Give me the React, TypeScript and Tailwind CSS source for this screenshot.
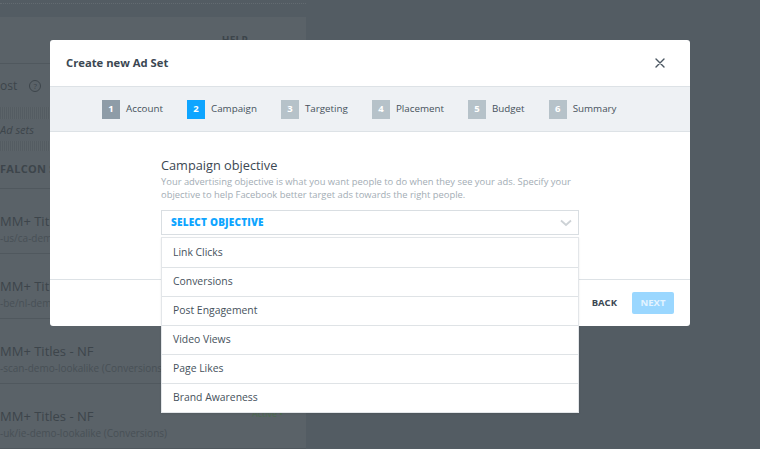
import React from 'react';

const steps = [
  { n: 1, label: 'Account', state: 'done' },
  { n: 2, label: 'Campaign', state: 'active' },
  { n: 3, label: 'Targeting', state: 'todo' },
  { n: 4, label: 'Placement', state: 'todo' },
  { n: 5, label: 'Budget', state: 'todo' },
  { n: 6, label: 'Summary', state: 'todo' },
];

const objectives = [
  'Link Clicks',
  'Conversions',
  'Post Engagement',
  'Video Views',
  'Page Likes',
  'Brand Awareness',
];

const rows = [
  { title: 'MM+ Titles', sub: '-us/ca-demo-lookalike (Conversions)' },
  { title: 'MM+ Titles', sub: '-be/nl-demo-lookalike (Conversions)' },
  { title: 'MM+ Titles - NF', sub: '-scan-demo-lookalike (Conversions)' },
  { title: 'MM+ Titles - NF', sub: '-uk/ie-demo-lookalike (Conversions)', active: true },
];

const hatch =
  'bg-[repeating-linear-gradient(90deg,#545c62_0px,#545c62_1px,#5c6469_1px,#5c6469_2px)]';

function Background() {
  return (
    <div className="flex h-full w-full flex-col">
      {/* top strip */}
      <div className="h-[18px] w-[306px] pt-[3px]">
        <div className="border-t border-dotted border-[#636b71]" />
      </div>
      <div className="flex w-[306px] flex-1 flex-col bg-[#5a6268] text-[#3d454b]">
        <div className="flex h-[47px] items-center justify-end border-b border-[#50585e] pr-[58px]">
          <span className="text-[10px] font-bold tracking-wide">HELP</span>
        </div>
        <div className="flex h-[43px] items-center gap-3 text-[12px]">
          <span>ost</span>
          <span className="flex h-[12px] w-[12px] items-center justify-center rounded-full border border-[#3d454b] text-[8px]">?</span>
        </div>
        <div className={`h-[12px] ${hatch}`} />
        <div className="flex h-[22px] items-center text-[11px] italic">Ad sets</div>
        <div className={`h-[10px] ${hatch}`} />
        <div className="flex h-[38px] items-center border-b border-[#50585e] text-[11px] font-bold tracking-wide">FALCON SOCIAL</div>
        {rows.map((r, i) => (
          <div key={i} className="relative flex h-[65px] flex-col border-b border-[#50585e] pt-[24px]">
            <span className="text-[13px] leading-[17px]">{r.title}</span>
            <span className="mt-[1px] text-[10px] leading-[15px] text-[#485056]">{r.sub}</span>
            {r.active && (
              <span className="absolute left-[252px] top-[23px] text-[9px] text-[#4c6a4e]">Active •</span>
            )}
          </div>
        ))}
      </div>
    </div>
  );
}

function Modal() {
  return (
    <div className="flex w-[640px] flex-col rounded-[3px] bg-white">
      {/* Header */}
      <div className="flex h-[47px] items-center justify-between border-b border-[#dde2e6] px-4">
        <h2 className="text-[11.25px] font-bold text-[#3b4752]">Create new Ad Set</h2>
        <svg width="10" height="10" viewBox="0 0 10 10" className="mr-[9px]">
          <path d="M1 1L9 9M9 1L1 9" stroke="#4a5661" strokeWidth="1.4" strokeLinecap="round" />
        </svg>
      </div>

      {/* Steps */}
      <div className="flex h-[45px] items-center gap-6 border-b border-[#dde2e6] bg-[#eef1f4] pl-[52px]">
        {steps.map((s) => (
          <div key={s.n} className="flex items-center gap-[6px]">
            <span
              className={`flex h-[19px] w-[18px] items-center justify-center text-[9.5px] font-bold text-white ${
                s.state === 'active' ? 'bg-[#0ea5ff]' : s.state === 'done' ? 'bg-[#8e9ca7]' : 'bg-[#b6c2c9]'
              }`}
            >
              {s.n}
            </span>
            <span className="text-[9.8px] text-[#46525c]">{s.label}</span>
          </div>
        ))}
      </div>

      {/* Body */}
      <div className="h-[147px] pt-[24px]">
        <div className="relative mx-auto w-[418px]">
          <h3 className="text-[12.75px] leading-[18px] text-[#3b4752]">Campaign objective</h3>
          <p className="mt-[2px] text-[9.4px] leading-[12.5px] text-[#a3adb5]">
            Your advertising objective is what you want people to do when they see your ads. Specify your objective to help Facebook better target ads towards the right people.
          </p>
          <div className="mt-[9px] flex h-[25px] items-center justify-between border border-[#d9dee2] pl-[9px] pr-[6px]">
            <span className="text-[10px] font-extrabold tracking-[0.2px] text-[#0ea5ff]">SELECT OBJECTIVE</span>
            <svg width="12" height="8" viewBox="0 0 12 8">
              <path d="M1 1.5L6 6L11 1.5" stroke="#cdd2d6" strokeWidth="1.8" fill="none" />
            </svg>
          </div>
          <ul className="absolute left-0 right-0 top-[calc(100%+2px)] z-10 border border-[#e3e6e9] bg-white shadow-[0_1px_2px_rgba(0,0,0,0.08)]">
            {objectives.map((o, i) => (
              <li
                key={o}
                className={`flex h-[29px] items-center pl-[11px] text-[10.4px] text-[#46525c] ${i > 0 ? 'border-t border-[#dfe3e6]' : ''}`}
              >
                {o}
              </li>
            ))}
          </ul>
        </div>
      </div>

      {/* Footer */}
      <div className="flex h-[47px] items-center justify-end gap-[15px] border-t border-[#dde2e6] pr-4">
        <button className="text-[9.5px] font-bold text-[#3b4752]">BACK</button>
        <button className="h-[22px] w-[42px] rounded-[2px] bg-[#9ad7ff] text-[9.5px] font-bold text-[#e4f4ff]">NEXT</button>
      </div>
    </div>
  );
}

export default function App() {
  return (
    <div className="relative h-[449px] w-[760px] overflow-hidden bg-[#535c63] font-['Open_Sans',sans-serif]">
      <Background />
      <div className="absolute inset-0 pl-[50px] pt-[40px]">
        <Modal />
      </div>
    </div>
  );
}
